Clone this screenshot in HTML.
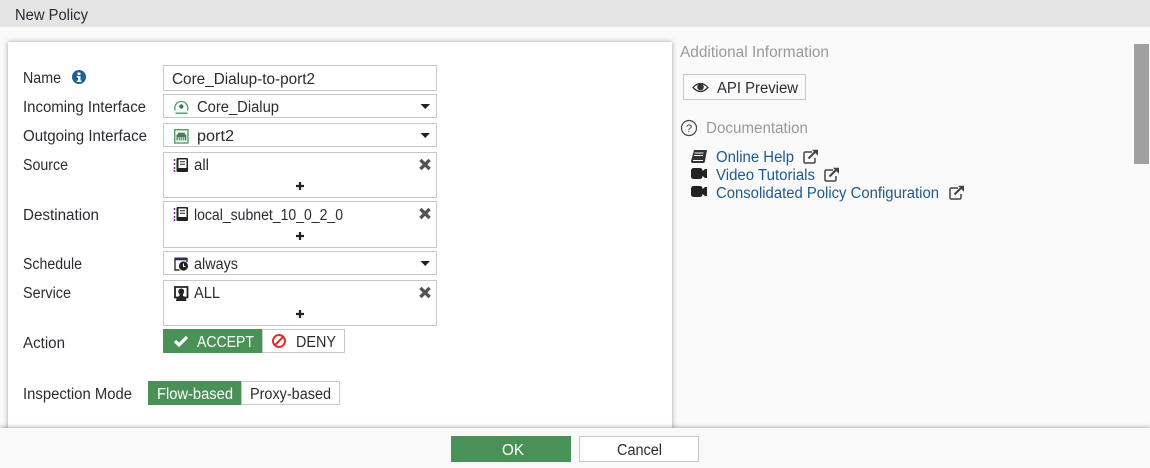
<!DOCTYPE html>
<html><head><meta charset="utf-8"><title>New Policy</title>
<style>
html,body{margin:0;padding:0;width:1150px;height:468px;overflow:hidden;background:#fafafa}
.a{position:absolute;box-sizing:border-box}
.f{background:#fff;border:1px solid #c8c8c8}
svg{position:absolute;left:0;top:0}
text{font-family:"Liberation Sans",sans-serif;font-size:15.5px;fill:#2b2b33;white-space:pre}
</style></head><body>
<div class="a" style="left:0;top:0;width:1150px;height:27px;background:#e4e4e4"></div>
<div class="a" style="left:8px;top:42px;width:664px;height:400px;background:#fff;box-shadow:0 0 5px rgba(0,0,0,.35)"></div>
<div class="a" style="left:1134px;top:44px;width:15px;height:120px;background:#a0a0a0"></div>
<div class="a f" style="left:163px;top:65px;width:274px;height:26px"></div>
<div class="a f" style="left:163px;top:94px;width:274px;height:24px"></div>
<div class="a f" style="left:163px;top:123px;width:274px;height:24px"></div>
<div class="a f" style="left:163px;top:152px;width:274px;height:46px"></div>
<div class="a f" style="left:163px;top:201px;width:274px;height:47px"></div>
<div class="a f" style="left:163px;top:251px;width:274px;height:24px"></div>
<div class="a f" style="left:163px;top:280px;width:274px;height:46px"></div>
<div class="a" style="left:163px;top:329px;width:99px;height:24px;background:#4a9158"></div>
<div class="a f" style="left:262px;top:329px;width:83px;height:24px"></div>
<div class="a" style="left:148px;top:381px;width:93px;height:24px;background:#4a9158"></div>
<div class="a f" style="left:241px;top:381px;width:99px;height:24px"></div>
<div class="a f" style="left:683px;top:74px;width:123px;height:26px;background:#fbfbfb"></div>
<div class="a" style="left:0;top:428px;width:1150px;height:40px;background:#f9f9f9;box-shadow:0 -1px 4px rgba(0,0,0,.3)"></div>
<div class="a" style="left:451px;top:436px;width:120px;height:26px;background:#4a9158"></div>
<div class="a f" style="left:579px;top:436px;width:120px;height:26px"></div>

<svg width="1150" height="468" viewBox="0 0 1150 468" xmlns="http://www.w3.org/2000/svg">
<defs>
<g id="addr"><rect x="2.500" y="0" width="11.500" height="14" rx="1" fill="#222"/><rect x="4.500" y="1.500" width="8" height="8.500" fill="#fff"/><path d="M6 3.800h5M6 6.300h5" stroke="#222" stroke-width="1"/><path d="M.5 1v2M.5 5v2M.5 9v2M.5 12v2" stroke="#7a2a8c" stroke-width="1.500"/></g>
<path id="x" d="M-5.800 -3.400L-3.400 -5.800L0 -2.400L3.400 -5.800L5.800 -3.400L2.400 0L5.800 3.400L3.400 5.800L0 2.400L-3.400 5.800L-5.800 3.400L-2.400 0Z" fill="#555"/>
<path id="plus" d="M-4 0H4M0 -4V4" stroke="#222" stroke-width="2.200"/>
<path id="caret" d="M0 0H9.500L4.750 5Z" fill="#222"/>
<g id="ext" fill="none" stroke="#444" stroke-width="1.500"><path d="M9 3H2.500Q1 3 1 4.500V12.500Q1 14 2.500 14H10.500Q12 14 12 12.500V9"/><path d="M5.500 9.500L13 2" stroke-width="2"/><path d="M9 .8H15V6.800Z" fill="#444" stroke="none"/></g>
<g id="cam" fill="#222"><rect x="0" y="0" width="11.500" height="11" rx="2.500"/><path d="M10.500 4L14 1H16V10H14L10.500 7Z"/></g>
</defs>

<text x="15" y="20" textLength="73" lengthAdjust="spacingAndGlyphs">New Policy</text>

<text x="23" y="83" textLength="38" lengthAdjust="spacingAndGlyphs">Name</text>
<circle cx="79" cy="77" r="7" fill="#1b6295"/>
<rect x="77.500" y="72.500" width="3" height="2.500" fill="#fff"/>
<path d="M76.800 76H80.500V80.500H81.500V82H76.800V80.500H78V77.500H76.800Z" fill="#fff"/>
<text x="23" y="112" textLength="123" lengthAdjust="spacingAndGlyphs">Incoming Interface</text>
<text x="23" y="141" textLength="124" lengthAdjust="spacingAndGlyphs">Outgoing Interface</text>
<text x="23" y="170" textLength="45" lengthAdjust="spacingAndGlyphs">Source</text>
<text x="23" y="220" textLength="76" lengthAdjust="spacingAndGlyphs">Destination</text>
<text x="23" y="269" textLength="59" lengthAdjust="spacingAndGlyphs">Schedule</text>
<text x="23" y="298" textLength="48" lengthAdjust="spacingAndGlyphs">Service</text>
<text x="23" y="348" textLength="42" lengthAdjust="spacingAndGlyphs">Action</text>
<text x="23" y="399" textLength="109" lengthAdjust="spacingAndGlyphs">Inspection Mode</text>

<text x="172" y="84" textLength="143" lengthAdjust="spacingAndGlyphs">Core_Dialup-to-port2</text>

<path d="M175.300 110.500A6.500 6.500 0 1 1 187.300 110.500" fill="none" stroke="#4f9a70" stroke-width="1.300"/>
<circle cx="181.300" cy="106.500" r="2.200" fill="#2f7f4b"/><path d="M175.500 113.200H187.500" stroke="#3f8f5b" stroke-width="1.300"/>
<text x="197" y="112" textLength="82" lengthAdjust="spacingAndGlyphs">Core_Dialup</text>
<use href="#caret" x="420.500" y="104"/>

<rect x="174.700" y="129.700" width="13.300" height="13.300" fill="#f2f7f3" stroke="#5a9a70" stroke-width="1.400"/>
<path d="M176.500 140.500V134.500H178V132.800H184.800V134.500H186.300V140.500Z" fill="#3f8058"/>
<path d="M178.200 137v3.500M180.200 137v3.500M182.200 137v3.500M184.200 137v3.500" stroke="#f2f7f3" stroke-width=".9"/>
<text x="197" y="141" textLength="37" lengthAdjust="spacingAndGlyphs">port2</text>
<use href="#caret" x="420.500" y="133"/>

<use href="#addr" x="174" y="158"/>
<text x="194" y="170" textLength="15" lengthAdjust="spacingAndGlyphs">all</text>
<use href="#x" x="425" y="164.500"/>
<use href="#plus" x="300" y="186"/>

<use href="#addr" x="174" y="207"/>
<text x="194" y="220" textLength="149" lengthAdjust="spacingAndGlyphs">local_subnet_10_0_2_0</text>
<use href="#x" x="425" y="213.500"/>
<use href="#plus" x="300" y="236"/>

<path d="M179.500 270H175V258.500H187V262" fill="none" stroke="#2a2a3a" stroke-width="1.400"/>
<path d="M175 257.500H187V260.300H175Z" fill="#3a2a5a"/>
<circle cx="183.500" cy="266" r="4.600" fill="#222"/><path d="M183.500 263.500V266.500H185.500" stroke="#fff" fill="none" stroke-width="1"/>
<text x="194" y="269" textLength="44" lengthAdjust="spacingAndGlyphs">always</text>
<use href="#caret" x="420.500" y="261"/>

<path d="M175 287H187.500V297.500H175Z" fill="#fff" stroke="#222" stroke-width="1.800"/>
<circle cx="181.200" cy="291.500" r="3" fill="#222"/>
<path d="M176 301Q176.500 296.500 179.500 296V294H183V296Q186 296.500 186.500 301Z" fill="#222"/>
<text x="194" y="298" textLength="26" lengthAdjust="spacingAndGlyphs">ALL</text>
<use href="#x" x="425" y="292.500"/>
<use href="#plus" x="300" y="314"/>

<path d="M175 341L179 345L187 337" fill="none" stroke="#fff" stroke-width="3.200"/>
<text x="197" y="347" textLength="57" lengthAdjust="spacingAndGlyphs" style="fill:#fff">ACCEPT</text>
<circle cx="279" cy="341" r="6" fill="none" stroke="#d8332f" stroke-width="2"/>
<path d="M275 345L283 337" stroke="#d8332f" stroke-width="2"/>
<text x="296" y="347" textLength="40" lengthAdjust="spacingAndGlyphs">DENY</text>

<text x="157" y="399" textLength="76" lengthAdjust="spacingAndGlyphs" style="fill:#fff">Flow-based</text>
<text x="250" y="399" textLength="81" lengthAdjust="spacingAndGlyphs">Proxy-based</text>

<text x="680" y="57" textLength="149" lengthAdjust="spacingAndGlyphs" style="fill:#999">Additional Information</text>
<path d="M693 87.500Q700.500 79.500 708 87.500Q700.500 95.500 693 87.500Z" fill="none" stroke="#333" stroke-width="1.300"/>
<circle cx="700.500" cy="87" r="3.300" fill="#333"/>
<text x="717" y="93" textLength="81" lengthAdjust="spacingAndGlyphs">API Preview</text>

<circle cx="689" cy="128" r="7.500" fill="none" stroke="#444" stroke-width="1.200"/>
<text x="686" y="132" style="font-size:11px;fill:#444">?</text>
<text x="706" y="133" textLength="102" lengthAdjust="spacingAndGlyphs" style="fill:#999">Documentation</text>

<path d="M694 150H707L705 161Q705 163 703 163H692.500Q691 163 691 161Z" fill="#333"/>
<path d="M694.500 153H703.500M694 155.500H703M693 160.500H703" stroke="#fafafa" stroke-width=".9"/>
<text x="716" y="162" textLength="78" lengthAdjust="spacingAndGlyphs" style="fill:#1f5a8c">Online Help</text>
<use href="#ext" x="803" y="149"/>

<use href="#cam" x="691" y="168"/>
<text x="716" y="180" textLength="99" lengthAdjust="spacingAndGlyphs" style="fill:#1f5a8c">Video Tutorials</text>
<use href="#ext" x="824" y="167"/>

<use href="#cam" x="691" y="186"/>
<text x="716" y="198" textLength="223" lengthAdjust="spacingAndGlyphs" style="fill:#1f5a8c">Consolidated Policy Configuration</text>
<use href="#ext" x="949" y="185"/>

<text x="502" y="455" textLength="22" lengthAdjust="spacingAndGlyphs" style="fill:#fff">OK</text>
<text x="617" y="455" textLength="45" lengthAdjust="spacingAndGlyphs">Cancel</text>
</svg>
</body></html>
